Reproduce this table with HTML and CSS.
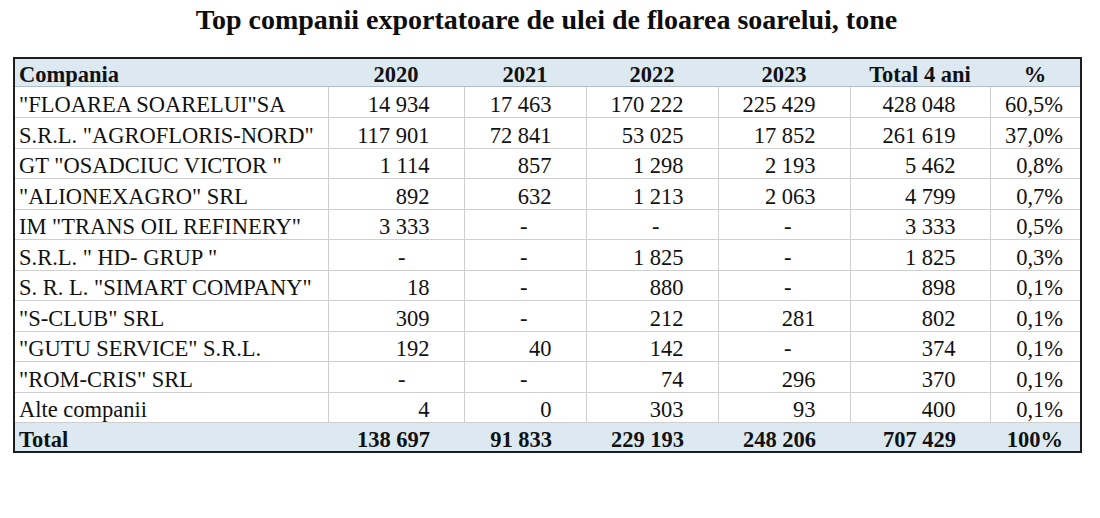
FILE: index.html
```html
<!DOCTYPE html>
<html lang="ro">
<head>
<meta charset="utf-8">
<title>Top companii exportatoare</title>
<link rel="stylesheet" href="styles.css">
</head>
<body>
<div class="wrap">
  <h1 class="title">Top companii exportatoare de ulei de floarea soarelui, tone</h1>
  <table class="tbl">
    <colgroup>
      <col class="c-name">
      <col class="c-2020">
      <col class="c-2021">
      <col class="c-2022">
      <col class="c-2023">
      <col class="c-tot">
      <col class="c-pct">
    </colgroup>
    <thead>
      <tr class="head">
        <th class="name">Compania</th>
        <th>2020</th>
        <th>2021</th>
        <th>2022</th>
        <th>2023</th>
        <th>Total 4 ani</th>
        <th>%</th>
      </tr>
    </thead>
    <tbody>
      <tr><td class="name">"FLOAREA SOARELUI"SA</td><td>14 934</td><td>17 463</td><td>170 222</td><td>225 429</td><td>428 048</td><td class="pct">60,5%</td></tr>
      <tr><td class="name">S.R.L. "AGROFLORIS-NORD"</td><td>117 901</td><td>72 841</td><td>53 025</td><td>17 852</td><td>261 619</td><td class="pct">37,0%</td></tr>
      <tr><td class="name">GT "OSADCIUC VICTOR "</td><td>1 114</td><td>857</td><td>1 298</td><td>2 193</td><td>5 462</td><td class="pct">0,8%</td></tr>
      <tr><td class="name">"ALIONEXAGRO" SRL</td><td>892</td><td>632</td><td>1 213</td><td>2 063</td><td>4 799</td><td class="pct">0,7%</td></tr>
      <tr><td class="name">IM "TRANS OIL REFINERY"</td><td>3 333</td><td class="dash">-</td><td class="dash">-</td><td class="dash">-</td><td>3 333</td><td class="pct">0,5%</td></tr>
      <tr><td class="name">S.R.L. " HD- GRUP "</td><td class="dash">-</td><td class="dash">-</td><td>1 825</td><td class="dash">-</td><td>1 825</td><td class="pct">0,3%</td></tr>
      <tr><td class="name">S. R. L. "SIMART COMPANY"</td><td>18</td><td class="dash">-</td><td>880</td><td class="dash">-</td><td>898</td><td class="pct">0,1%</td></tr>
      <tr><td class="name">"S-CLUB" SRL</td><td>309</td><td class="dash">-</td><td>212</td><td>281</td><td>802</td><td class="pct">0,1%</td></tr>
      <tr><td class="name">"GUTU SERVICE" S.R.L.</td><td>192</td><td>40</td><td>142</td><td class="dash">-</td><td>374</td><td class="pct">0,1%</td></tr>
      <tr><td class="name">"ROM-CRIS" SRL</td><td class="dash">-</td><td class="dash">-</td><td>74</td><td>296</td><td>370</td><td class="pct">0,1%</td></tr>
      <tr><td class="name">Alte companii</td><td>4</td><td>0</td><td>303</td><td>93</td><td>400</td><td class="pct">0,1%</td></tr>
    </tbody>
    <tfoot>
      <tr class="foot"><td class="name">Total</td><td>138 697</td><td>91 833</td><td>229 193</td><td>248 206</td><td>707 429</td><td class="pct">100%</td></tr>
    </tfoot>
  </table>
</div>
</body>
</html>
```

FILE: styles.css
```css
html, body {
  margin: 0;
  padding: 0;
  background: #ffffff;
}

body {
  font-family: "Liberation Serif", "Times New Roman", serif;
  color: #111111;
}

.wrap {
  width: 1067px;
  padding: 4px 0 0 13px;
}

.title {
  margin: 0 0 22px 0;
  font-size: 28px;
  font-weight: bold;
  line-height: 31px;
  text-align: center;
  color: #0d0d0d;
}

.tbl {
  width: 1067px;
  table-layout: fixed;
  border-collapse: collapse;
  border: 2px solid #1e1e1e;
  font-size: 22.5px;
}

.c-name { width: 314px; }
.c-2020 { width: 136px; }
.c-2021 { width: 122px; }
.c-2022 { width: 132px; }
.c-2023 { width: 132px; }
.c-tot  { width: 140px; }
.c-pct  { width: 91px; }

.tbl th,
.tbl td {
  padding: 0 34px 0 4px;
  line-height: 25px;
  vertical-align: bottom;
  text-align: right;
  white-space: nowrap;
  overflow: hidden;
}

.tbl tbody td {
  border: 1px solid #cfcfcf;
  height: 29.5px;
}

.tbl tbody tr:first-child td {
  height: 30px;
}

.tbl .name {
  text-align: left;
  padding-left: 4px;
  padding-right: 0;
}

.tbl td.pct {
  padding-right: 17px;
}

.tbl td.dash {
  padding-right: 58px;
}

.head th {
  background: #dde9f1;
  font-weight: bold;
  text-align: center;
  padding: 0;
  line-height: 22px;
  height: 27px;
  border-bottom: 1px solid #aebfcb;
}

.head th.name {
  text-align: left;
  padding-left: 4px;
}

.foot td {
  background: #dde9f1;
  font-weight: bold;
  line-height: 22px;
  height: 28px;
  border-top: 1px solid #cfdbe3;
}
```
